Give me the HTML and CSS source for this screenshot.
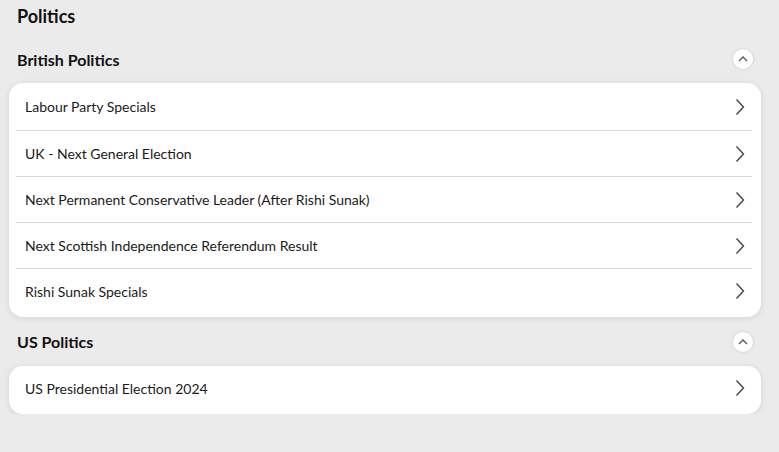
FILE: index.html
```html
<!DOCTYPE html>
<html lang="en">
<head>
    <meta charset="UTF-8">
    <meta name="viewport" content="width=device-width, initial-scale=1.0">
    <title>Politics</title>
    <link rel="stylesheet" href="styles.css">
</head>
<body>
    <h1 class="page-title">Politics</h1>

    <div class="group">
        <div class="group-header">
            <h2>British Politics</h2>
            <span class="toggle">
                <svg width="10" height="6" viewBox="0 0 10 6"><path d="M1 5 L5 1 L9 5" fill="none" stroke="#555" stroke-width="1.3"/></svg>
            </span>
        </div>
        <div class="card">
            <a class="row" href="#"><span>Labour Party Specials</span><svg class="chev" width="10" height="18" viewBox="0 0 10 18"><path d="M1.5 1.5 L8.5 9 L1.5 16.5" fill="none" stroke="#444" stroke-width="1.4"/></svg></a>
            <a class="row" href="#"><span>UK - Next General Election</span><svg class="chev" width="10" height="18" viewBox="0 0 10 18"><path d="M1.5 1.5 L8.5 9 L1.5 16.5" fill="none" stroke="#444" stroke-width="1.4"/></svg></a>
            <a class="row" href="#"><span>Next Permanent Conservative Leader (After Rishi Sunak)</span><svg class="chev" width="10" height="18" viewBox="0 0 10 18"><path d="M1.5 1.5 L8.5 9 L1.5 16.5" fill="none" stroke="#444" stroke-width="1.4"/></svg></a>
            <a class="row" href="#"><span>Next Scottish Independence Referendum Result</span><svg class="chev" width="10" height="18" viewBox="0 0 10 18"><path d="M1.5 1.5 L8.5 9 L1.5 16.5" fill="none" stroke="#444" stroke-width="1.4"/></svg></a>
            <a class="row" href="#"><span>Rishi Sunak Specials</span><svg class="chev" width="10" height="18" viewBox="0 0 10 18"><path d="M1.5 1.5 L8.5 9 L1.5 16.5" fill="none" stroke="#444" stroke-width="1.4"/></svg></a>
        </div>
    </div>

    <div class="group">
        <div class="group-header">
            <h2>US Politics</h2>
            <span class="toggle">
                <svg width="10" height="6" viewBox="0 0 10 6"><path d="M1 5 L5 1 L9 5" fill="none" stroke="#555" stroke-width="1.3"/></svg>
            </span>
        </div>
        <div class="card">
            <a class="row single" href="#"><span>US Presidential Election 2024</span><svg class="chev" width="10" height="18" viewBox="0 0 10 18"><path d="M1.5 1.5 L8.5 9 L1.5 16.5" fill="none" stroke="#444" stroke-width="1.4"/></svg></a>
        </div>
    </div>
</body>
</html>
```

FILE: styles.css
```css
body {
    margin: 0;
    padding: 0 18px 0 9px;
    background-color: #ebebeb;
    font-family: Lato, "Open Sans", sans-serif;
    color: #111;
}
.page-title {
    font-size: 18px;
    font-weight: bold;
    margin: 0;
    padding: 5px 0 0 8px;
    line-height: 22px;
}
.group-header {
    display: flex;
    align-items: center;
    justify-content: space-between;
    height: 49px;
    padding: 0 8px;
}
.group-header h2 {
    font-size: 16px;
    font-weight: bold;
    margin: 0;
}
.group:first-of-type .group-header {
    margin-top: 8px;
    height: 48px;
}
.toggle {
    width: 20px;
    height: 20px;
    border-radius: 50%;
    background-color: white;
    display: flex;
    align-items: center;
    justify-content: center;
    box-shadow: 0 0 3px rgba(0, 0, 0, 0.15);
}
.card {
    background-color: white;
    border-radius: 14px;
    box-shadow: 0 1px 6px rgba(0, 0, 0, 0.10);
    padding: 0 9px 0 7px;
}
.row {
    display: flex;
    align-items: center;
    justify-content: space-between;
    height: 45px;
    padding: 0 7px 0 9px;
    border-top: 1px solid #d9d9d9;
    font-size: 14px;
    color: #1a1a1a;
    text-decoration: none;
}
.row:first-child {
    border-top: none;
    height: 47px;
}
.row:last-child {
    height: 44px;
    padding-bottom: 4px;
}
.row.single {
    height: 44px;
    padding-bottom: 4px;
}
.chev {
    display: block;
}
```
